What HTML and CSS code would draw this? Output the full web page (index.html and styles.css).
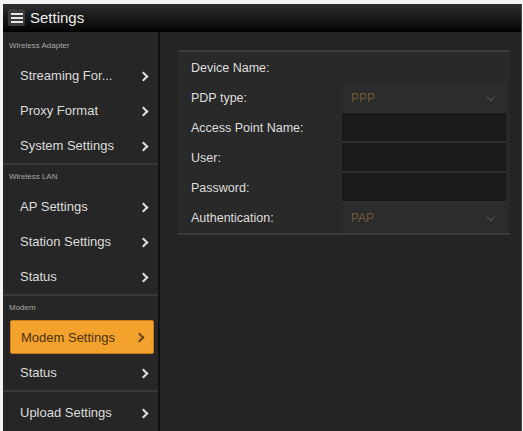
FILE: index.html
```html
<!DOCTYPE html>
<html lang="en">
  <head>
    <meta charset="utf-8">
    <title>Settings</title>
    <link rel="stylesheet" href="styles.css">
  </head>
  <body>
    <div class="app">
      <header class="topbar">
        <span class="menuIcon">
          <svg width="12" height="10" viewBox="0 0 12 10"><rect x="0" y="0" width="12" height="2" fill="#e6e6e6"/><rect x="0" y="4" width="12" height="2" fill="#e6e6e6"/><rect x="0" y="8" width="12" height="2" fill="#e6e6e6"/></svg>
        </span>
        <h1>Settings</h1>
      </header>

      <div class="body">
        <nav class="sidebar">
          <section class="group first">
            <h4>Wireless Adapter</h4>
            <a class="item"><span>Streaming For...</span><i class="chev"></i></a>
            <a class="item"><span>Proxy Format</span><i class="chev"></i></a>
            <a class="item"><span>System Settings</span><i class="chev"></i></a>
          </section>
          <section class="group">
            <h4>Wireless LAN</h4>
            <a class="item"><span>AP Settings</span><i class="chev"></i></a>
            <a class="item"><span>Station Settings</span><i class="chev"></i></a>
            <a class="item"><span>Status</span><i class="chev"></i></a>
          </section>
          <section class="group">
            <h4>Modem</h4>
            <a class="item active"><span>Modem Settings</span><i class="chev"></i></a>
            <a class="item"><span>Status</span><i class="chev"></i></a>
          </section>
          <section class="group last">
            <a class="item"><span>Upload Settings</span><i class="chev"></i></a>
          </section>
        </nav>

        <main class="content">
          <div class="panel">
            <div class="row">
              <label>Device Name:</label>
              <div class="value"></div>
            </div>
            <div class="row">
              <label>PDP type:</label>
              <div class="value select"><span>PPP</span><i class="down"></i></div>
            </div>
            <div class="row">
              <label>Access Point Name:</label>
              <div class="value input"></div>
            </div>
            <div class="row">
              <label>User:</label>
              <div class="value input"></div>
            </div>
            <div class="row">
              <label>Password:</label>
              <div class="value input"></div>
            </div>
            <div class="row">
              <label>Authentication:</label>
              <div class="value select"><span>PAP</span><i class="down"></i></div>
            </div>
          </div>
        </main>
      </div>
    </div>
  </body>
</html>
```
FILE: styles.css
```css
html, body {
  margin: 0;
  background: #f4f4f4;
}
body {
  padding: 4px 1px 0 3px;
  font-family: "Liberation Sans", Arial, sans-serif;
}
.app {
  height: 427px;
  background: #252525;
  border-right: 1px solid #4a4a4a;
  display: flex;
  flex-direction: column;
  overflow: hidden;
}

/* title bar */
.topbar {
  height: 28px;
  display: flex;
  align-items: center;
  background: linear-gradient(#2e2e2e, #151515 60%, #050505);
  border-bottom: 1px solid #000;
  box-sizing: border-box;
}
.menuIcon {
  display: flex;
  align-items: center;
  justify-content: center;
  width: 17px;
  height: 17px;
  margin-left: 5px;
  background: #3a3a3a;
  border-radius: 2px;
}
.topbar h1 {
  margin: 0 0 0 5px;
  font-size: 15px;
  font-weight: normal;
  color: #ececec;
}

.body {
  flex: 1;
  display: flex;
}

/* left menu */
.sidebar {
  width: 155px;
  background: #262626;
  border-right: 2px solid #111;
}
.group {
  border-top: 2px solid #383838;
}
.group.first {
  border-top: none;
}
.group.first h4 {
  height: 26px;
  line-height: 28px;
}
.group.last {
  padding-top: 3px;
}
.group h4 {
  margin: 0;
  height: 24px;
  line-height: 24px;
  padding-left: 6px;
  font-size: 8px;
  font-weight: normal;
  color: #a8a8a8;
}
.item {
  display: flex;
  align-items: center;
  justify-content: space-between;
  height: 35px;
  padding: 0 11px 0 17px;
  font-size: 13px;
  color: #dcdcdc;
  box-sizing: border-box;
}
.chev {
  width: 5px;
  height: 5px;
  border-right: 2px solid #e0e0e0;
  border-top: 2px solid #e0e0e0;
  transform: rotate(45deg);
  margin-top: 1px;
}
.item.active {
  height: 34px;
  margin: 0 4px 1px 7px;
  padding: 0 10px 0 10px;
  background: #f4a22e;
  border: 1px solid #c57d1c;
  border-radius: 2px;
  color: #4b3212;
}
.item.active .chev {
  border-color: #6a4616;
}

/* form panel */
.content {
  flex: 1;
  background: #242424;
  padding: 18px 11px 0 18px;
}
.panel {
  background: #292929;
  border-top: 2px solid #3b3b3b;
  border-bottom: 2px solid #3b3b3b;
  padding-top: 1px;
}
.row {
  display: flex;
  height: 30px;
}
.row label {
  width: 164px;
  padding-left: 13px;
  box-sizing: border-box;
  line-height: 30px;
  font-size: 12.5px;
  color: #dedede;
}
.value {
  flex: 1;
  margin-right: 4px;
}
.value.input {
  background: #1a1a1a;
  border-bottom: 2px solid #2f2f2f;
  box-sizing: border-box;
}
.value.select {
  display: flex;
  align-items: center;
  justify-content: space-between;
  background: #2c2c2c;
  padding: 0 12px 0 9px;
  font-size: 12px;
  color: #6e5a38;
}
.down {
  width: 5px;
  height: 5px;
  border-right: 1.5px solid #555;
  border-bottom: 1.5px solid #555;
  transform: rotate(45deg);
  margin-top: -3px;
}
```
